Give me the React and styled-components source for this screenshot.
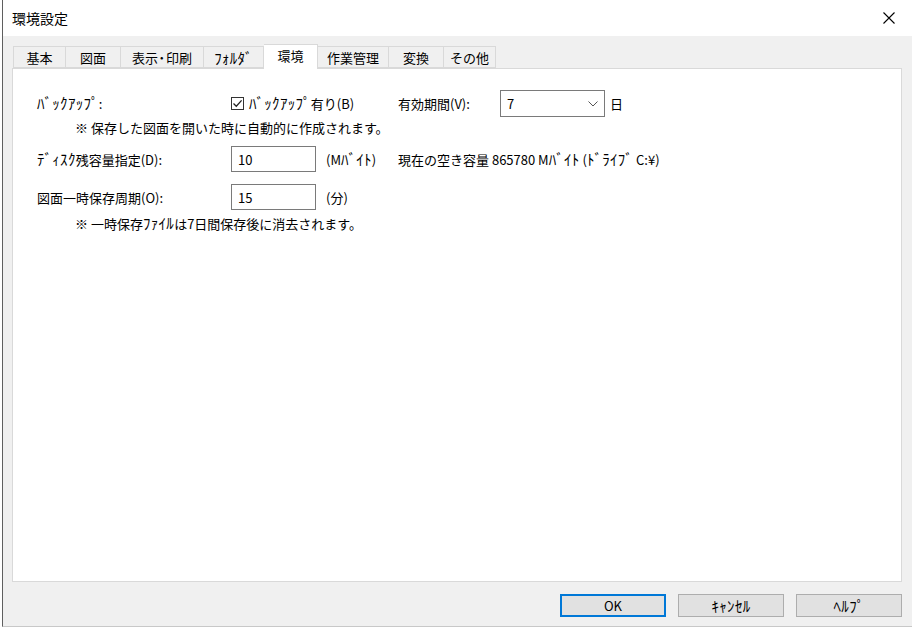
import styled, { createGlobalStyle } from "styled-components";

const GlobalStyle = createGlobalStyle`
  html, body { margin: 0; padding: 0; background: #fff; }
  body { font-family: "Noto Sans CJK JP", "Noto Sans", sans-serif; font-size: 13px; color: #000; }
`;

// half-width katakana is much smaller in Noto than in the original UI font,
// so runs of it are set a bit larger
function T({ children }) {
  const parts = String(children).split(/([\uFF61-\uFF9F]+)/);
  return parts.map((p, i) =>
    /[\uFF61-\uFF9F]/.test(p) ? <Kana key={i}>{p}</Kana> : p
  );
}

const tabs = [
  { label: "基本", width: 53 },
  { label: "図面", width: 55 },
  { label: "表示･印刷", width: 83 },
  { label: "ﾌｫﾙﾀﾞ", width: 60 },
  { label: "環境", width: 54, active: true },
  { label: "作業管理", width: 71 },
  { label: "変換", width: 55 },
  { label: "その他", width: 52 },
];

export default function App() {
  return (
    <>
      <GlobalStyle />
      <Window>
        <TitleBar>
          <Title>環境設定</Title>
          <Close aria-label="close">
            <svg width="12" height="12" viewBox="0 0 12 12">
              <path d="M0.5 0.5 L11.5 11.5 M11.5 0.5 L0.5 11.5" stroke="#000" strokeWidth="1.1" />
            </svg>
          </Close>
        </TitleBar>
        <Body>
          <TabStrip>
            {tabs.map((t) => (
              <Tab key={t.label} $width={t.width} $active={t.active}>
                <T>{t.label}</T>
              </Tab>
            ))}
          </TabStrip>
          <Panel>
            <Row $top={21} $height={27}>
              <Label><T>ﾊﾞｯｸｱｯﾌﾟ:</T></Label>
              <CheckGroup>
                <CheckBox>
                  <svg width="11" height="11" viewBox="0 0 11 11">
                    <path d="M1.5 5.5 L4.3 8.3 L9.6 2.4" fill="none" stroke="#222" strokeWidth="1.3" />
                  </svg>
                </CheckBox>
                <span><T>ﾊﾞｯｸｱｯﾌﾟ有り(B)</T></span>
              </CheckGroup>
              <FieldLabel $width={102}>有効期間(V):</FieldLabel>
              <Combo>
                <span>7</span>
                <svg width="10" height="6" viewBox="0 0 10 6">
                  <path d="M0.5 0.5 L5 5 L9.5 0.5" fill="none" stroke="#555" strokeWidth="1" />
                </svg>
              </Combo>
              <Unit $gap={5}>日</Unit>
            </Row>
            <Note $top={3}>※ 保存した図面を開いた時に自動的に作成されます。</Note>
            <Row $top={10} $height={26}>
              <Label><T>ﾃﾞｨｽｸ残容量指定(D):</T></Label>
              <TextBox>10</TextBox>
              <FieldLabel $width={82} $pad={10}><T>(Mﾊﾞｲﾄ)</T></FieldLabel>
              <span><T>現在の空き容量 865780 Mﾊﾞｲﾄ (ﾄﾞﾗｲﾌﾞ C:¥)</T></span>
            </Row>
            <Row $top={12} $height={26}>
              <Label>図面一時保存周期(O):</Label>
              <TextBox>15</TextBox>
              <FieldLabel $width={82} $pad={10}>(分)</FieldLabel>
            </Row>
            <Note $top={5}><T>※ 一時保存ﾌｧｲﾙは7日間保存後に消去されます。</T></Note>
          </Panel>
          <ButtonBar>
            <Button $default>OK</Button>
            <Button><T>ｷｬﾝｾﾙ</T></Button>
            <Button><T>ﾍﾙﾌﾟ</T></Button>
          </ButtonBar>
        </Body>
      </Window>
    </>
  );
}

const Kana = styled.span`
  font-size: 15px;
  line-height: 1;
  letter-spacing: 0.3px;
`;

const Window = styled.div`
  margin-left: 2px;
  width: 909px;
  height: 626px;
  border-left: 1px solid #5f5f5f;
  border-bottom: 1px solid #c8c8c8;
  display: flex;
  flex-direction: column;
  background: #f0f0f0;
`;

const TitleBar = styled.div`
  height: 36px;
  flex: none;
  background: #fff;
  display: flex;
  align-items: center;
  justify-content: space-between;
  padding: 0 17px 0 9px;
`;

const Title = styled.div`
  font-size: 14px;
  padding-bottom: 1px;
`;

const Close = styled.div`
  width: 12px;
  height: 12px;
  display: flex;
`;

const Body = styled.div`
  flex: 1;
  display: flex;
  flex-direction: column;
  padding: 8px 10px 0 9px;
`;

const TabStrip = styled.div`
  display: flex;
  align-items: flex-end;
  height: 24px;
  padding-left: 1px;
  position: relative;
  z-index: 1;
`;

const Tab = styled.div`
  width: ${(p) => p.$width}px;
  box-sizing: border-box;
  height: ${(p) => (p.$active ? 25 : 22)}px;
  margin-bottom: ${(p) => (p.$active ? -1 : 0)}px;
  background: ${(p) => (p.$active ? "#fff" : "#f0f0f0")};
  border-top: 1px solid #d9d9d9;
  border-right: 1px solid #d9d9d9;
  border-bottom: ${(p) => (p.$active ? "none" : "1px solid #d9d9d9")};
  display: flex;
  align-items: center;
  justify-content: center;
  font-size: 13px;
  white-space: nowrap;
  padding-bottom: ${(p) => (p.$active ? 3 : 0)}px;
  &:first-child { border-left: 1px solid #d9d9d9; }
`;

const Panel = styled.div`
  height: 514px;
  box-sizing: border-box;
  background: #fff;
  border: 1px solid #d9d9d9;
  padding-left: 24px;
  display: flex;
  flex-direction: column;
`;

const Row = styled.div`
  display: flex;
  align-items: center;
  height: ${(p) => p.$height}px;
  margin-top: ${(p) => p.$top}px;
  white-space: nowrap;
`;

const Label = styled.div`
  width: 194px;
  flex: none;
`;

const CheckGroup = styled.div`
  width: 167px;
  flex: none;
  display: flex;
  align-items: center;
  gap: 5px;
`;

const CheckBox = styled.div`
  width: 13px;
  height: 13px;
  box-sizing: border-box;
  border: 1px solid #333;
  background: #fff;
  display: flex;
  align-items: center;
  justify-content: center;
`;

const FieldLabel = styled.div`
  width: ${(p) => p.$width}px;
  padding-left: ${(p) => p.$pad || 0}px;
  box-sizing: border-box;
  flex: none;
`;

const Combo = styled.div`
  width: 105px;
  height: 27px;
  box-sizing: border-box;
  border: 1px solid #7a7a7a;
  display: flex;
  align-items: center;
  justify-content: space-between;
  padding: 0 6px 0 6px;
  background: #fff;
  flex: none;
`;

const Unit = styled.span`
  margin-left: ${(p) => p.$gap}px;
`;

const TextBox = styled.div`
  width: 85px;
  height: 26px;
  box-sizing: border-box;
  border: 1px solid #7a7a7a;
  display: flex;
  align-items: center;
  padding-left: 6px;
  flex: none;
`;

const Note = styled.div`
  margin-top: ${(p) => p.$top}px;
  padding-left: 38px;
  height: 16px;
  line-height: 16px;
  white-space: nowrap;
`;

const ButtonBar = styled.div`
  display: flex;
  justify-content: flex-end;
  gap: 12px;
  padding-top: 12px;
`;

const Button = styled.div`
  width: 106px;
  height: 23px;
  box-sizing: border-box;
  background: #e1e1e1;
  border: ${(p) => (p.$default ? "2px solid #0078d7" : "1px solid #adadad")};
  display: flex;
  align-items: center;
  justify-content: center;
  font-size: 13px;
`;
